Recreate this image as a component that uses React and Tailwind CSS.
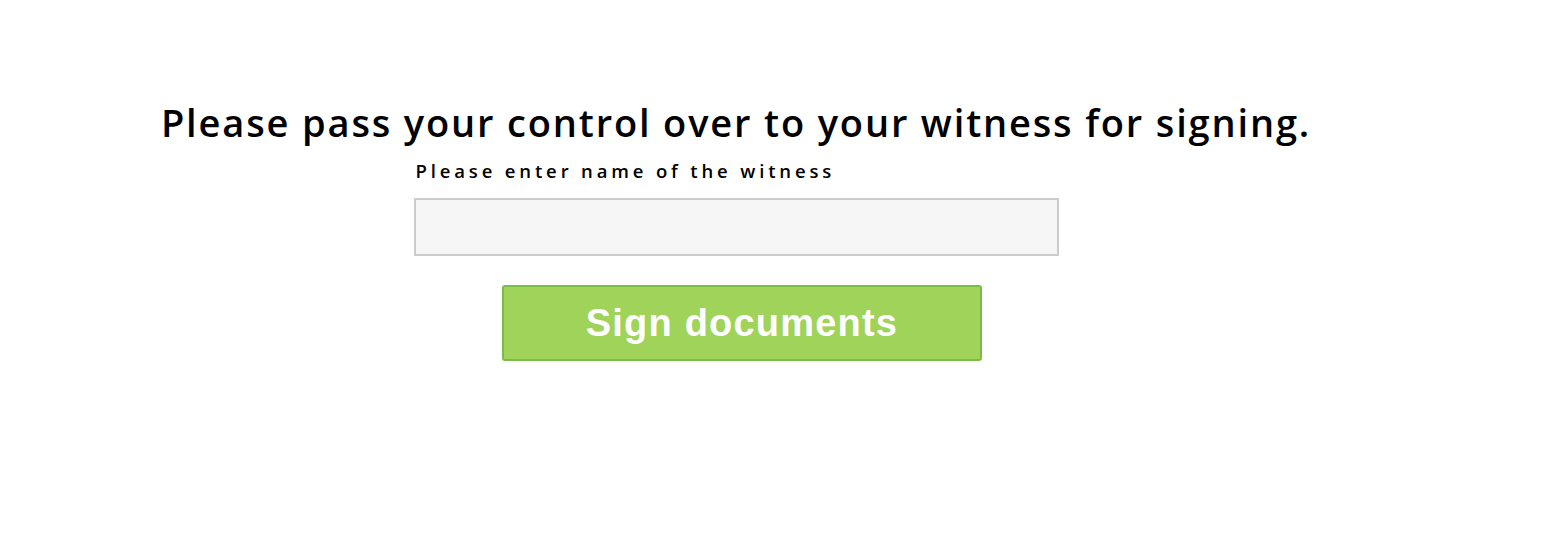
export default function App() {
  return (
    <div className="w-[1472px] flex flex-col items-center pt-[96px] bg-white min-h-[540px]">
      <h1 className="text-[38px] leading-[52px] font-[650] tracking-[1.85px] text-black font-['Open_Sans',sans-serif]">
        Please pass your control over to your witness for signing.
      </h1>
      <div className="flex flex-col w-[645px] mt-[2px]">
        <label className="text-[18.5px] leading-[42px] font-[650] tracking-[3.85px] text-black pl-[2px] font-['Open_Sans',sans-serif]">
          Please enter name of the witness
        </label>
        <input type="text" className="mt-[6px] h-[58px] w-[645px] border-2 border-[#cccccc] bg-[#f6f6f6] outline-none" />
      </div>
      <button className="mt-[29px] ml-[12px] w-[480px] h-[76px] rounded-[3px] border-2 border-[#7cbb48] bg-[#9fd35a] text-white text-[38px] font-bold tracking-[1.2px] font-['Liberation_Sans',Arial,sans-serif]">
        Sign documents
      </button>
    </div>
  );
}
